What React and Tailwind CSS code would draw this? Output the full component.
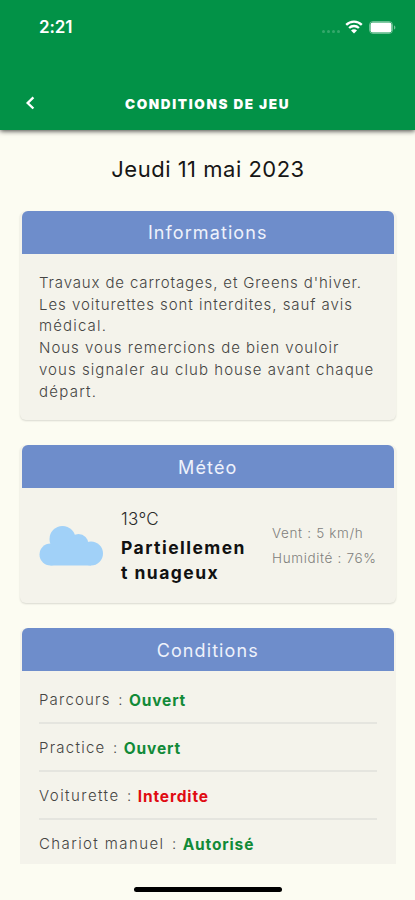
import React from 'react';

const infoLines = [
  { text: "Travaux de carrotages, et Greens d'hiver.", tracking: 'tracking-[0.86px]' },
  { text: 'Les voiturettes sont interdites, sauf avis', tracking: 'tracking-[0.95px]' },
  { text: 'médical.', tracking: 'tracking-[1.15px]' },
  { text: 'Nous vous remercions de bien vouloir', tracking: 'tracking-[1px]' },
  { text: 'vous signaler au club house avant chaque', tracking: 'tracking-[1.05px]' },
  { text: 'départ.', tracking: 'tracking-[1.25px]' },
];

const conditions = [
  { label: 'Parcours', value: 'Ouvert', color: 'text-[#118a38]', labelTracking: 'tracking-[1.2px]' },
  { label: 'Practice', value: 'Ouvert', color: 'text-[#118a38]', labelTracking: 'tracking-[1.25px]' },
  { label: 'Voiturette', value: 'Interdite', color: 'text-[#e00b12]', labelTracking: 'tracking-[1.45px]' },
  { label: 'Chariot manuel', value: 'Autorisé', color: 'text-[#118a38]', labelTracking: 'tracking-[1.4px]' },
];

const WifiIcon = () => (
  <svg width="18" height="14" viewBox="0 0 18 14" fill="none" stroke="white" strokeWidth="2.3">
    <path d="M1.2 4.9a11 11 0 0 1 15.6 0" />
    <path d="M4.1 8a7 7 0 0 1 9.8 0" />
    <path d="M9 13.6 6 10.5a4.2 4.2 0 0 1 6 0Z" fill="white" stroke="none" />
  </svg>
);

const BatteryIcon = () => (
  <svg width="27" height="13" viewBox="0 0 27 13">
    <rect x="0.5" y="0.5" width="23" height="12" rx="3.5" fill="none" stroke="white" strokeOpacity="0.4" />
    <rect x="1.5" y="1.5" width="21" height="10" rx="2.2" fill="white" />
    <path d="M25 4.5v4c.8-.3 1.4-1.1 1.4-2s-.6-1.7-1.4-2Z" fill="white" fillOpacity="0.45" />
  </svg>
);

const CloudIcon = () => (
  <svg width="64" height="40" viewBox="0 0 64 40" fill="#a1d1f8">
    <circle cx="11.5" cy="28.5" r="11" />
    <circle cx="23.5" cy="13" r="13" />
    <circle cx="39.5" cy="18" r="10" />
    <circle cx="52" cy="27.5" r="12" />
    <path d="M11.5 20h40.5v19.5H11.5z" />
  </svg>
);

const Card = ({ title, className, children }) => (
  <section className={`flex flex-col bg-[#f4f3eb] ${className}`}>
    <h2 className="mr-[2px] ml-[1.5px] flex h-[43px] shrink-0 items-center justify-center rounded-t-[6px] bg-[#6e8dcb] pt-[1px] text-[18px] tracking-[1.1px] text-[#eef2fb]">
      {title}
    </h2>
    {children}
  </section>
);

const App = () => {
  return (
    <div className="flex h-[900px] w-[415px] flex-col overflow-hidden bg-[#fcfcf2] font-[Inter,sans-serif]">
      <header className="z-10 flex h-[130px] shrink-0 flex-col bg-[#029247] text-white shadow-[0_1px_5px_rgba(0,0,0,0.75)]">
        <div className="flex h-[54px] items-center justify-between pr-[19px] pl-[39px]">
          <span className="pt-[2px] text-[17px] font-semibold tracking-[-0.1px]">2:21</span>
          <div className="flex items-center">
            <div className="mt-[9px] mr-[5px] flex gap-[2px] opacity-20">
              <i className="size-[3px] rounded-full bg-white" />
              <i className="size-[3px] rounded-full bg-white" />
              <i className="size-[3px] rounded-full bg-white" />
              <i className="size-[3px] rounded-full bg-white" />
            </div>
            <WifiIcon />
            <div className="ml-[6px]">
              <BatteryIcon />
            </div>
          </div>
        </div>
        <div className="grid h-[76px] grid-cols-[60px_1fr_60px] items-center pt-[22px]">
          <svg className="ml-[25px]" width="10" height="14" viewBox="0 0 10 14" fill="none" stroke="white" strokeWidth="2.4">
            <path d="M8.4 1.3 2.7 7l5.7 5.5" />
          </svg>
          <h1 className="pt-[3px] text-center text-[13.5px] font-black tracking-[1.65px] whitespace-nowrap">CONDITIONS DE JEU</h1>
        </div>
      </header>

      <main className="flex h-[734px] shrink-0 flex-col overflow-hidden pr-[19px] pl-[20px]">
        <div className="flex h-[80.5px] shrink-0 items-center justify-center pb-[2px] text-[22px] tracking-[0.5px] text-[#161616]">
          Jeudi 11 mai 2023
        </div>

        <Card title="Informations" className="h-[209.5px] shrink-0 rounded-[6px] shadow-[0_1px_2px_rgba(0,0,0,0.14)]">
          <div className="flex flex-col pt-[18.5px] pl-[19px] text-[15px] leading-[21.7px] font-light text-[#454543]">
            {infoLines.map((line) => (
              <p key={line.text} className={`whitespace-nowrap ${line.tracking}`}>{line.text}</p>
            ))}
          </div>
        </Card>

        <Card title="Météo" className="mt-[25px] h-[158px] shrink-0 rounded-[6px] shadow-[0_1px_2px_rgba(0,0,0,0.14)]">
          <div className="flex flex-1 items-center pl-[19px]">
            <CloudIcon />
            <div className="ml-[18px] w-[151px] text-[17.5px] leading-[25px]">
              <p className="h-[29px] text-[17px] leading-[26px] font-light tracking-[0.3px] text-[#2a2a2a]">13°C</p>
              <p className="font-bold tracking-[1.45px] text-[#111]">Partiellemen<br />t nuageux</p>
            </div>
            <div className="text-[13.5px] leading-[25px] font-light whitespace-nowrap text-[#80807c]">
              <p className="tracking-[0.65px]">Vent : 5 km/h</p>
              <p className="tracking-[0.65px]">Humidité : 76%</p>
            </div>
          </div>
        </Card>

        <Card title="Conditions" className="mt-[25px] shrink-0 rounded-t-[6px]">
          <ul className="px-[19px] pt-[5px]">
            {conditions.map((item) => (
              <li key={item.label} className="flex h-[48px] items-center border-b-2 border-[#e5e5df] pt-[3px] text-[15px]">
                <span className={`font-light text-[#454543] ${item.labelTracking}`}>{item.label}</span>
                <span className="mr-[6.5px] ml-[7.5px] font-light text-[#454543]">:</span>
                <span className={`text-[15.5px] font-bold tracking-[0.85px] ${item.color}`}>{item.value}</span>
              </li>
            ))}
          </ul>
        </Card>
      </main>

      <footer className="flex h-9 items-center justify-center pt-[14px]">
        <div className="h-[5px] w-[148px] rounded-full bg-black" />
      </footer>
    </div>
  );
};

export default App;
